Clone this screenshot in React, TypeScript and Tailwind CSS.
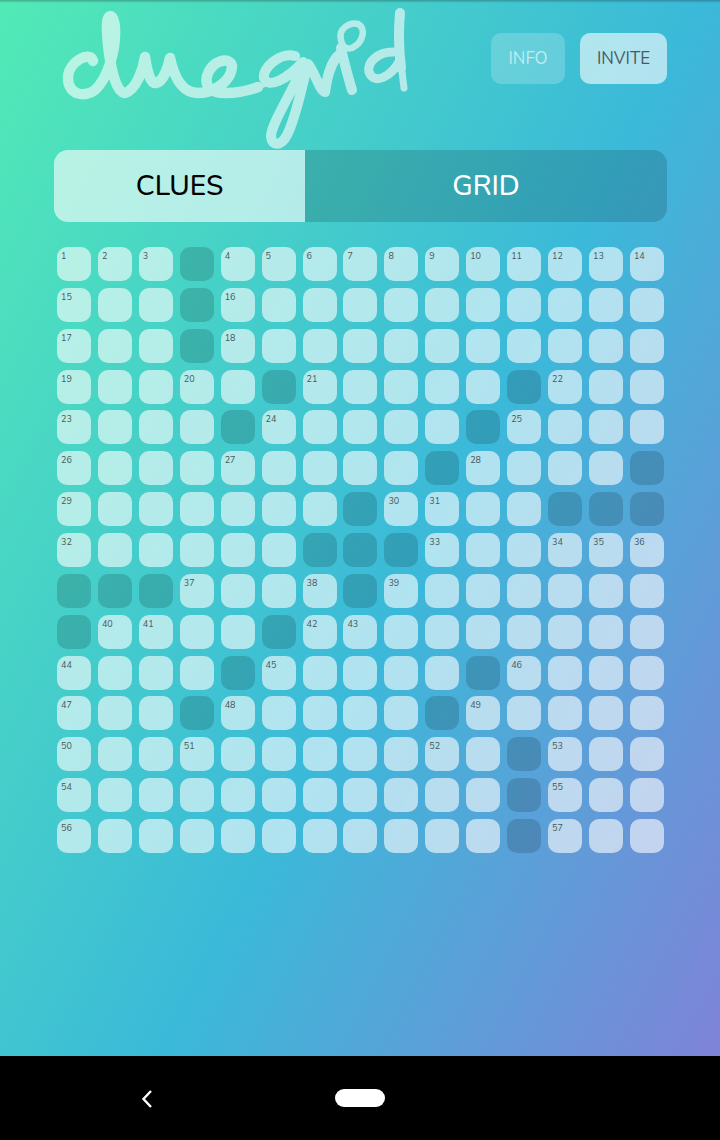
const font = "[font-family:Nunito,Lato,'Noto_Sans',sans-serif]"

// -1 = blocked square, 0 = empty, otherwise the clue number
const B = -1
const board: number[][] = [
    [1, 2, 3, B, 4, 5, 6, 7, 8, 9, 10, 11, 12, 13, 14],
    [15, 0, 0, B, 16, 0, 0, 0, 0, 0, 0, 0, 0, 0, 0],
    [17, 0, 0, B, 18, 0, 0, 0, 0, 0, 0, 0, 0, 0, 0],
    [19, 0, 0, 20, 0, B, 21, 0, 0, 0, 0, B, 22, 0, 0],
    [23, 0, 0, 0, B, 24, 0, 0, 0, 0, B, 25, 0, 0, 0],
    [26, 0, 0, 0, 27, 0, 0, 0, 0, B, 28, 0, 0, 0, B],
    [29, 0, 0, 0, 0, 0, 0, B, 30, 31, 0, 0, B, B, B],
    [32, 0, 0, 0, 0, 0, B, B, B, 33, 0, 0, 34, 35, 36],
    [B, B, B, 37, 0, 0, 38, B, 39, 0, 0, 0, 0, 0, 0],
    [B, 40, 41, 0, 0, B, 42, 43, 0, 0, 0, 0, 0, 0, 0],
    [44, 0, 0, 0, B, 45, 0, 0, 0, 0, B, 46, 0, 0, 0],
    [47, 0, 0, B, 48, 0, 0, 0, 0, B, 49, 0, 0, 0, 0],
    [50, 0, 0, 51, 0, 0, 0, 0, 0, 52, 0, B, 53, 0, 0],
    [54, 0, 0, 0, 0, 0, 0, 0, 0, 0, 0, B, 55, 0, 0],
    [56, 0, 0, 0, 0, 0, 0, 0, 0, 0, 0, B, 57, 0, 0],
]

const Logo = () => (
    <svg viewBox="40 3 400 147" className="w-[400px] h-[147px] shrink-0 opacity-60" fill="none" stroke="white" strokeLinecap="round" strokeLinejoin="round">
        <path strokeWidth={10.5} d="M93 61 C90 50 68 62 68 78 C68 95 85 98 95 90 C108 78 116 50 115 28 C114 12 106 12 107 30 C108 55 114 93 125 93 C136 90 143 70 145 57 C147 70 150 84 156 83 C163 82 168 68 170 58 C173 72 180 93 198 93 C215 93 232 80 232 66 C230 56 212 60 207 76 C204 90 215 93 225 93 C240 93 250 90 258 87" />
        <path strokeWidth={3} d="M250 90 L264 86" />
        <path strokeWidth={10} d="M295 56 C280 52 262 68 264 78 C268 90 288 78 303 62 C298 85 272 120 271 136 C272 148 282 145 287 135 C296 118 302 85 308 64 C314 70 320 92 325 92 C327 78 330 62 340 54" />
        <path strokeWidth={10} d="M341 48 C344 62 349 80 352 90" />
        <path strokeWidth={6.5} d="M341 40 C338 28 350 22 358 24 C366 28 364 42 352 48 C346 50 342 46 341 40" />
        <path strokeWidth={9} d="M393 52 C378 52 367 62 369 72 C374 86 392 76 400 60" />
        <path strokeWidth={10} d="M400 13 C398 35 399 52 401 68" />
        <path strokeWidth={7} d="M401 62 C402 72 403 80 404 88" />
    </svg>
)

const Cell = ({ value }: { value: number }) => {
    if (value === B) return <div className="w-[34px] h-[34px] rounded-[10px] bg-black/15" />
    return (
        <div className="w-[34px] h-[34px] rounded-[10px] bg-white/60 px-1 pt-[3px] text-[9px] leading-3 text-[#47585c]">
            {value > 0 ? value : ""}
        </div>
    )
}

export default function App() {
    return (
        <div className={`w-[720px] h-[1140px] flex flex-col overflow-hidden ${font}`}>
            <div className="h-[1056px] bg-[linear-gradient(117deg,#52eab6_0%,#3bb9d9_56%,#7f83d8_100%)]">
                <div className="h-[3px] bg-gradient-to-b from-black/25 to-transparent" />
                <div className="flex items-start h-[147px] pl-[40px] pr-[53px]">
                    <Logo />
                    <div className="ml-auto mt-[30px] flex gap-[15px]">
                        <button className="w-[74px] h-[51px] rounded-[10px] bg-white/20 text-[17px] text-white/60">INFO</button>
                        <button className="w-[87px] h-[51px] rounded-[10px] bg-white/60 text-[17px] text-[#4a5a60]">INVITE</button>
                    </div>
                </div>
                <div className="ml-[54px] w-[613px] h-[72px] flex rounded-[14px] overflow-hidden text-[28px] font-medium">
                    <div className="w-[251px] flex items-center justify-center bg-white/60 text-black">CLUES</div>
                    <div className="flex-1 flex items-center justify-center bg-black/15 text-white">GRID</div>
                </div>
                <div className="ml-[57px] mt-[25px] w-[607px] grid grid-cols-[repeat(15,34px)] justify-between gap-y-[6.87px]">
                    {board.flat().map((value, i) => (
                        <Cell key={i} value={value} />
                    ))}
                </div>
            </div>
            <div className="h-[84px] bg-black flex items-center relative">
                <svg viewBox="0 0 14 20" className="absolute left-[140px] top-[33px] w-[14px] h-[20px]" fill="none" stroke="white" strokeWidth={2.4}>
                    <path d="M11 2 L3.5 10 L11 18" />
                </svg>
                <div className="absolute left-[335px] top-[33px] w-[50px] h-[18px] rounded-full bg-white" />
            </div>
        </div>
    )
}
